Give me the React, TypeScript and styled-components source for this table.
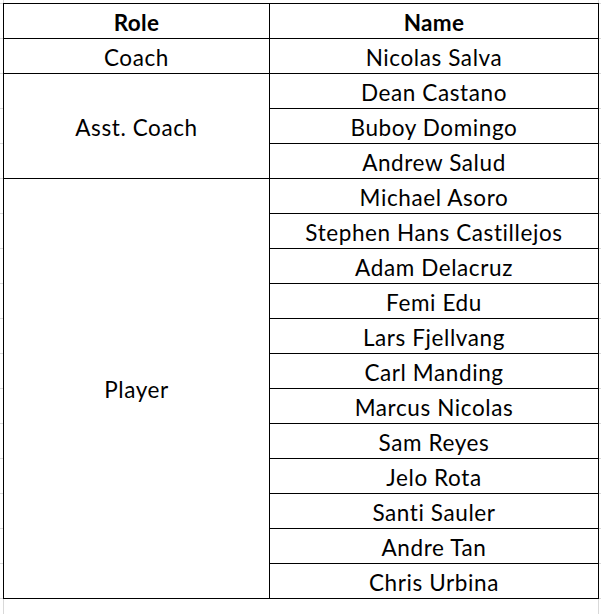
import React from "react";
import styled, { createGlobalStyle } from "styled-components";

const GlobalStyle = createGlobalStyle`
  html, body {
    margin: 0;
    padding: 0;
    background: #ffffff;
  }
  body {
    font-family: Lato, "Liberation Sans", sans-serif;
  }
`;

const Sheet = styled.div`
  width: 601px;
  height: 614px;
  padding: 3px 0 0 3px;
  box-sizing: border-box;
  background-color: #ffffff;
  background-image:
    linear-gradient(to right, #d9d9d9 1px, transparent 1px),
    linear-gradient(to bottom, #d9d9d9 1px, transparent 1px);
  background-size: 595px 100%, 100% 35px;
  background-position: 3px 0, 0 3px;
`;

const Table = styled.table`
  border-collapse: collapse;
  table-layout: fixed;
  width: 596px;
  background: #ffffff;
`;

const Col = styled.col<{ $w: number }>`
  width: ${(p) => p.$w}px;
`;

const HeadCell = styled.th`
  border: 1px solid #000000;
  height: 35px;
  box-sizing: border-box;
  padding: 2px 0 0;
  line-height: 31px;
  font-weight: 700;
  font-size: 22.5px;
  letter-spacing: 0.3px;
  font-variant-ligatures: none;
  color: #000000;
  text-align: center;
  vertical-align: middle;
`;

const Cell = styled.td`
  border: 1px solid #000000;
  height: 35px;
  box-sizing: border-box;
  padding: 2px 0 0;
  line-height: 31px;
  font-size: 22.5px;
  letter-spacing: 0.6px;
  font-variant-ligatures: none;
  color: #000000;
  text-align: center;
  vertical-align: middle;
  white-space: nowrap;
`;

type Group = { role: string; names: string[] };

const groups: Group[] = [
  { role: "Coach", names: ["Nicolas Salva"] },
  { role: "Asst. Coach", names: ["Dean Castano", "Buboy Domingo", "Andrew Salud"] },
  {
    role: "Player",
    names: [
      "Michael Asoro",
      "Stephen Hans Castillejos",
      "Adam Delacruz",
      "Femi Edu",
      "Lars Fjellvang",
      "Carl Manding",
      "Marcus Nicolas",
      "Sam Reyes",
      "Jelo Rota",
      "Santi Sauler",
      "Andre Tan",
      "Chris Urbina",
    ],
  },
];

export default function App() {
  return (
    <>
      <GlobalStyle />
      <Sheet>
        <Table>
          <colgroup>
            <Col $w={266} />
            <Col $w={329} />
          </colgroup>
          <thead>
            <tr>
              <HeadCell>Role</HeadCell>
              <HeadCell>Name</HeadCell>
            </tr>
          </thead>
          <tbody>
            {groups.map((g) =>
              g.names.map((n, i) => (
                <tr key={g.role + n}>
                  {i === 0 && <Cell rowSpan={g.names.length}>{g.role}</Cell>}
                  <Cell>{n}</Cell>
                </tr>
              ))
            )}
          </tbody>
        </Table>
      </Sheet>
    </>
  );
}
